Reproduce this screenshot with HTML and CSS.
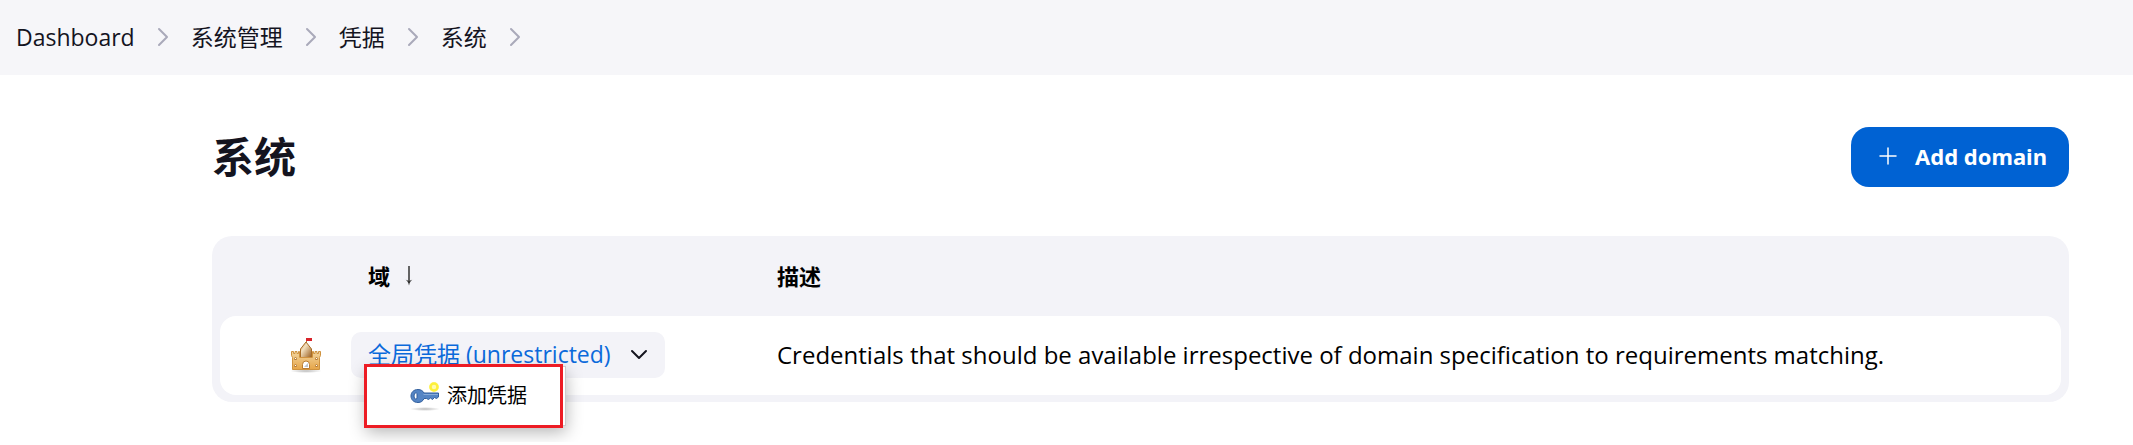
FILE: index.html
```html
<!DOCTYPE html>
<html lang="zh-CN">
<head>
<meta charset="utf-8">
<title>系统</title>
<link rel="stylesheet" href="styles.css">
</head>
<body>
<nav class="breadcrumbs" aria-label="Breadcrumb">
  <a href="#">Dashboard</a>
  <svg class="sep" viewBox="0 0 12 20"><path d="M2 2l8 8-8 8"/></svg>
  <a href="#">系统管理</a>
  <svg class="sep" viewBox="0 0 12 20"><path d="M2 2l8 8-8 8"/></svg>
  <a href="#">凭据</a>
  <svg class="sep" viewBox="0 0 12 20"><path d="M2 2l8 8-8 8"/></svg>
  <a href="#">系统</a>
  <svg class="sep" viewBox="0 0 12 20"><path d="M2 2l8 8-8 8"/></svg>
</nav>
<main class="page">
  <header class="page-head">
    <h1>系统</h1>
    <button class="primary" type="button">
      <svg class="plus" viewBox="0 0 18 18"><path d="M9 1v16M1 9h16"/></svg>
      <span>Add domain</span>
    </button>
  </header>
  <div class="table-box">
    <table class="domains">
      <thead>
        <tr>
          <th class="col-icon"></th>
          <th class="col-domain"><a href="#" class="sort">域<svg class="arrow" viewBox="0 0 10 20"><path d="M5 0v17"/><path class="head" d="M0 13q4 1 5 6.500q1-5.500 5-6.500l-5 2z"/></svg></a></th>
          <th>描述</th>
        </tr>
      </thead>
      <tbody>
        <tr>
          <td class="col-icon">
            <svg class="castle" viewBox="0 0 32 36">
              <defs>
                <linearGradient id="tower" x1="0" y1="0" x2="1" y2="1"><stop offset="0" stop-color="#c08a48"/><stop offset=".35" stop-color="#f2e0bf"/><stop offset="1" stop-color="#97591a"/></linearGradient>
                <linearGradient id="wall" x1="0" y1="0" x2="0" y2="1"><stop offset="0" stop-color="#f2d5a0"/><stop offset="1" stop-color="#e6a548"/></linearGradient>
                <radialGradient id="shade"><stop offset="0" stop-color="#bbb"/><stop offset="1" stop-color="#fff"/></radialGradient>
              </defs>
              <ellipse cx="16" cy="34" rx="16" ry="2" fill="url(#shade)"/>
              <path d="M16.500 7V1" stroke="#a97b42"/>
              <path d="M16 1h6v3h-6z" fill="#d8232a"/>
              <path d="M16 5l5.500 7v9h-11v-9z" fill="url(#tower)" stroke="#a96c25"/>
              <path d="M1.500 14.500h2v2h1.500v-2h2v2h1.500v-2h1v6h13v-6h1v2H25v-2h2v2h1.500v-2h2v4l-1 2v12h-27v-12l-1-2z" fill="url(#wall)" stroke="#cf923f"/>
              <path d="M12.500 31.500v-4a3.500 3.500 0 0 1 7 0v4z" fill="#fff" stroke="#bb7b2e"/>
              <path d="M14 30l4-4v4z" fill="#bfc3ca"/>
              <path d="M4.500 22.500v-1a1 1 0 0 1 2 0v1zM25.500 22.500v-1a1 1 0 0 1 2 0v1zM4.500 29.500v-1a1 1 0 0 1 2 0v1zM25.500 29.500v-1a1 1 0 0 1 2 0v1z" fill="#fff" stroke="#b87a30"/>
            </svg>
          </td>
          <td class="col-domain">
            <div class="domain">
              <a href="#" class="domain-link">全局凭据 (unrestricted)</a>
              <button class="toggle" type="button" aria-label="菜单"><svg viewBox="0 0 18 12"><path d="M2 2l7 7 7-7"/></svg></button>
              <div class="menu">
                <a href="#" class="menu-item">
                  <svg class="key" viewBox="0 0 32 30">
                    <ellipse cx="16" cy="28" rx="15" ry="2" fill="url(#shade)"/>
                    <circle cx="25" cy="6" r="5" fill="#fffab0"/>
                    <circle cx="25" cy="6" r="3.500" fill="none" stroke="#fdf03a" stroke-width="2.500"/>
                    <path d="M9 8.500c3 0 5 1.500 6 3.500h14.500v4l-2 1.500-2-1-2 2-2-1.500-2 1.500-2-1H15c-1 2.500-3 4-6 4-4.500 0-7-3-7-6.500s2.500-6.500 7-6.500z" fill="#5484c4" stroke="#315f9e"/>
                    <path d="M14.500 13.500H29" stroke="#87abd9"/>
                    <path d="M5.500 12.500q2-1.500 2.500 0v5q-1 1-2.500 0-1-2.500 0-5z" fill="#fff" stroke="#315f9e"/>
                  </svg>
                  <span>添加凭据</span>
                </a>
                <div class="outline"></div>
              </div>
            </div>
          </td>
          <td class="description">Credentials that should be available irrespective of domain specification to requirements matching.</td>
        </tr>
      </tbody>
    </table>
  </div>
</main>
</body>
</html>
```
FILE: styles.css
```css
* { box-sizing: border-box; }
body {
  margin: 0;
  background: #fff;
  color: #14141f;
  font: 23px/32px "Open Sans", "Noto Sans CJK SC", sans-serif;
}
a { color: inherit; text-decoration: none; }
svg { display: block; flex: none; fill: none; }
.breadcrumbs {
  display: flex;
  align-items: center;
  gap: 22px;
  height: 75px;
  padding: 0 16px 2px;
  background: #f6f6f9;
}
.sep { width: 12px; height: 20px; stroke: #a9a9ba; stroke-width: 2; stroke-linecap: round; stroke-linejoin: round; }
.page { padding: 52px 64px 40px 212px; }
.page-head {
  display: flex;
  align-items: center;
  justify-content: space-between;
  margin-bottom: 49px;
}
h1 { margin: 0; font-size: 42px; line-height: 60px; }
.primary {
  display: flex;
  align-items: center;
  gap: 18px;
  height: 60px;
  padding: 0 22px 2px 28px;
  border: 0;
  border-radius: 18px;
  background: #0062d3;
  color: #fff;
  font: bold 22px/32px "Noto Sans", sans-serif;
}
.plus { width: 18px; height: 18px; stroke: #fff; stroke-width: 1.5; stroke-linecap: round; }
.table-box { padding: 0 8px 7px; border-radius: 20px; background: #f3f3f8; }
.domains { width: 100%; table-layout: fixed; border-spacing: 0; color: #000; }
th { height: 80px; padding: 0 17px; text-align: left; font-size: 22px; }
td { height: 79px; padding: 0 17px 2px; background: #fff; }
td:first-child { border-radius: 16px 0 0 16px; }
td:last-child { border-radius: 0 16px 16px 0; }
.col-icon { width: 131px; padding: 0 29px 2px 0; }
.col-domain { width: 409px; }
td.col-domain { padding: 0 0 2px; }
.description { font-size: 24px; }
.sort { display: flex; align-items: center; gap: 14px; }
.arrow { width: 10px; height: 20px; stroke: #333; stroke-width: 1.5; }
.arrow .head { fill: #333; stroke: none; }
.castle { width: 32px; height: 36px; margin-left: auto; }
.domain {
  position: relative;
  display: flex;
  align-items: center;
  gap: 18px;
  width: fit-content;
  height: 46px;
  padding: 0 16px 0 17px;
  border-radius: 10px;
  background: #f3f3f8;
}
.domain-link { padding-bottom: 2px; color: #0b6adb; white-space: nowrap; }
.toggle { padding: 0; border: 0; background: none; }
.toggle svg { width: 20px; height: 12px; stroke: #14141f; stroke-width: 2; stroke-linecap: round; stroke-linejoin: round; }
.menu {
  position: absolute;
  top: 34px;
  left: 15px;
  width: 200px;
  border: 1px solid #ccc;
  background: #fff;
  box-shadow: 0 6px 16px rgba(0, 0, 0, .3);
}
.menu-item {
  display: flex;
  align-items: center;
  gap: 6px;
  height: 58px;
  padding-left: 42px;
  font-size: 20px;
}
.key { width: 32px; height: 30px; }
.outline {
  position: absolute;
  inset: -3px 2px -3px -3px;
  border: 3px solid #ed1c24;
  pointer-events: none;
}
```
